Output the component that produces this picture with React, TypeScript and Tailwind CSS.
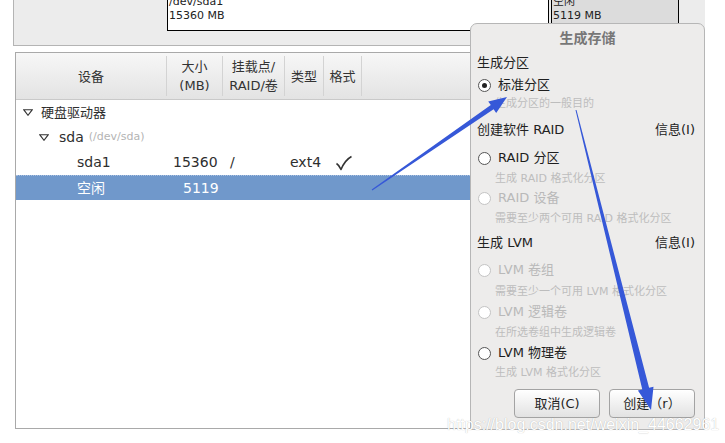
import React from 'react';

const FONT = "font-['DejaVu_Sans','Noto_Sans_CJK_SC',sans-serif]";

const Triangle = () => (
  <svg width="10" height="7" viewBox="0 0 10 7" className="shrink-0">
    <polygon points="0.7,0.7 9.3,0.7 5,6.3" fill="none" stroke="#333" strokeWidth="1.1" />
  </svg>
);

const Radio = ({ checked = false, disabled = false }: { checked?: boolean; disabled?: boolean }) => (
  <span
    className={`w-[13px] h-[13px] rounded-full border bg-white flex items-center justify-center shrink-0 ${
      disabled ? 'border-[#c4c4c4] bg-[#f2f2f2]' : 'border-[#555]'
    }`}
  >
    {checked && <span className="w-[5px] h-[5px] rounded-full bg-[#222]" />}
  </span>
);

const Option = ({ label, checked, disabled, h }: { label: string; checked?: boolean; disabled?: boolean; h: string }) => (
  <div className={`flex items-center gap-[7px] pl-[1px] ${h}`}>
    <Radio checked={checked} disabled={disabled} />
    <span className={`text-[13px] ${disabled ? 'text-[#b9b9b9]' : 'text-[#1e1e1e]'}`}>{label}</span>
  </div>
);

const Hint = ({ text, h }: { text: string; h: string }) => (
  <div className={`flex items-center pl-[18px] text-[11px] text-[#bdbdbd] ${h}`}>{text}</div>
);

const Heading = ({ text, info, h }: { text: string; info?: boolean; h: string }) => (
  <div className={`flex items-center justify-between pr-[3px] text-[13px] text-[#222] ${h}`}>
    <span>{text}</span>
    {info && <span>信息(I)</span>}
  </div>
);

const Button = ({ children }: { children: React.ReactNode }) => (
  <div className="w-[86px] h-[29px] rounded-[4px] border border-[#a3a3a3] bg-gradient-to-b from-white to-[#e2e2e2] flex items-center justify-center text-[13px] text-[#1e1e1e] shadow-[inset_0_1px_0_#fff]">
    {children}
  </div>
);

export default function App() {
  return (
    <div className={`relative w-[725px] h-[443px] bg-white overflow-hidden ${FONT}`}>
      <div className="flex flex-col pl-[13px]">
        {/* partition bar */}
        <div className="h-[46px] w-[692px] bg-[#ececec] border-l border-b border-[#b4b4b4] flex items-start pl-[153px]">
          <div className="w-[382px] h-[31px] bg-white border-x border-b border-black overflow-hidden text-[11px] leading-[14px] text-[#222] pl-[1px]">
            <div className="-mt-[5px]">/dev/sda1</div>
            <div>15360 MB</div>
          </div>
          <div className="ml-[2px] w-[128px] h-[31px] bg-[#dcdcdc] border-x border-b border-black overflow-hidden text-[11px] leading-[14px] text-[#222] pl-[1px]">
            <div className="-mt-[5px]">空闲</div>
            <div>5119 MB</div>
          </div>
        </div>

        {/* device tree */}
        <div className="mt-[6px] ml-[2px] w-[690px] h-[377px] border border-[#a9a9a9] bg-white flex flex-col">
          <div className="h-[47px] bg-gradient-to-b from-[#f7f7f7] to-[#e3e3e3] border-b border-[#c9c9c9] flex text-[13px] text-[#333] leading-[19px]">
            <div className="w-[151px] flex items-center justify-center border-r border-[#d3d3d3] my-[3px]">设备</div>
            <div className="w-[56px] flex flex-col items-center justify-center border-r border-[#d3d3d3] my-[3px]">
              <span>大小</span>
              <span>(MB)</span>
            </div>
            <div className="w-[62px] flex flex-col items-center justify-center border-r border-[#d3d3d3] my-[3px]">
              <span>挂载点/</span>
              <span>RAID/卷</span>
            </div>
            <div className="w-[39px] flex items-center justify-center border-r border-[#d3d3d3] my-[3px]">类型</div>
            <div className="w-[38px] flex items-center justify-center border-r border-[#d3d3d3] my-[3px]">格式</div>
          </div>

          <div className="h-[25px] flex items-center gap-[8px] pl-[7px] text-[13px] text-[#2e2e2e]">
            <Triangle />
            <span>硬盘驱动器</span>
          </div>
          <div className="h-[25px] flex items-center pl-[23px] text-[14px] text-[#2e2e2e]">
            <Triangle />
            <span className="ml-[10px]">sda</span>
            <span className="ml-[5px] text-[11px] text-[#b4b4b4]">(/dev/sda)</span>
          </div>
          <div className="h-[25px] flex items-center pl-[61px] text-[14px] text-[#2e2e2e]">
            <span className="w-[96px]">sda1</span>
            <span className="w-[57px]">15360</span>
            <span className="w-[60px]">/</span>
            <span className="w-[45px]">ext4</span>
            <svg width="18" height="16" viewBox="0 0 18 16">
              <path d="M1.5 8.5 Q4 10 6 14.5 Q10 5 16.5 1.5" fill="none" stroke="#333" strokeWidth="1.6" strokeLinejoin="round" />
            </svg>
          </div>
          <div className="h-[25px] flex items-center pl-[61px] text-[14px] text-white bg-[#7098cb] border-t border-dotted border-[#a9c0e0]">
            <span className="w-[106px]">空闲</span>
            <span>5119</span>
          </div>
        </div>
      </div>

      {/* dialog window */}
      <div className="absolute left-[470px] top-[23px] w-[235px] h-[407px] bg-[#edeceb] border border-[#b6b6b6] rounded-t-[7px] flex flex-col px-[6px]">
        <div className="h-[28px] flex items-center justify-center text-[14px] font-bold text-[#777]">生成存储</div>
        <Heading text="生成分区" h="h-[22px]" />
        <Option label="标准分区" checked h="h-[22px]" />
        <Hint text="生成分区的一般目的" h="h-[16px]" />
        <Heading text="创建软件 RAID" info h="h-[24px] mt-[6px]" />
        <Option label="RAID 分区" h="h-[20px] mt-[6px]" />
        <Hint text="生成 RAID 格式化分区" h="h-[22px]" />
        <Option label="RAID 设备" disabled h="h-[16px]" />
        <Hint text="需要至少两个可用 RAID 格式化分区" h="h-[26px]" />
        <Heading text="生成 LVM" info h="h-[22px]" />
        <Option label="LVM 卷组" disabled h="h-[32px]" />
        <Hint text="需要至少一个可用 LVM 格式化分区" h="h-[12px]" />
        <Option label="LVM 逻辑卷" disabled h="h-[28px]" />
        <Hint text="在所选卷组中生成逻辑卷" h="h-[14px]" />
        <Option label="LVM 物理卷" h="h-[26px]" />
        <Hint text="生成 LVM 格式化分区" h="h-[14px]" />
        <div className="mt-[9px] flex justify-end gap-[9px] pr-[3px]">
          <Button>取消(C)</Button>
          <Button>创建（r）</Button>
        </div>
      </div>

      {/* annotation arrows */}
      <svg className="absolute inset-0 pointer-events-none" width="725" height="443" viewBox="0 0 725 443">
        <polygon
          points="371.7,189.6 490.8,105.1 488.2,101.4 507,97 496.2,113 493.6,109.3 372.3,190.4"
          fill="#3658d8"
        />
        <polygon
          points="575.5,110.1 642.3,389.5 637.9,390.5 651,410 653.5,386.7 649.1,387.8 576.5,109.9"
          fill="#3658d8"
        />
      </svg>

      {/* watermark */}
      <div className="absolute left-[447px] top-[415px] font-['Liberation_Sans',sans-serif] text-[16px] leading-[20px] text-white [text-shadow:0_0_1px_rgba(0,0,0,0.3)] whitespace-nowrap">
        https://blog.csdn.net/weixin_44662961
      </div>
    </div>
  );
}
